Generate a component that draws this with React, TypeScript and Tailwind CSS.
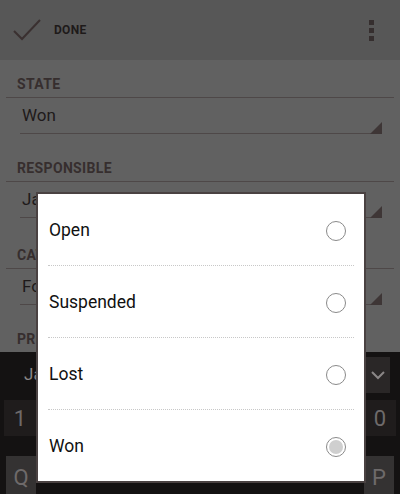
import React from "react";

const options = [
  { label: "Open", selected: false },
  { label: "Suspended", selected: false },
  { label: "Lost", selected: false },
  { label: "Won", selected: true },
];

const Field = ({ label, value }: { label: string; value: string }) => (
  <div>
    <div className="pt-[14px] pb-[2px] text-[14px] font-bold tracking-wide text-[#362e2e] border-b border-[#4e4848] mx-[6px] pl-[11px]">
      {label}
    </div>
    <div className="relative mx-[20px] h-[36px] border-b border-[#4e4848] flex items-center pl-[2px] pt-[1px] text-[17px] text-[#1e1a1a]">
      {value}
      <svg className="absolute right-[-2px] bottom-[-1px]" width="12" height="12" viewBox="0 0 12 12">
        <polygon points="12,0 12,12 0,12" fill="#3e3636" />
      </svg>
    </div>
  </div>
);

const App = () => {
  return (
    <div
      className="relative w-[400px] h-[494px] overflow-hidden bg-[#616161]"
      style={{ fontFamily: "Roboto, 'Noto Sans', sans-serif" }}
    >
      {/* action bar */}
      <div className="h-[60px] bg-[#575757] flex items-center">
        <svg className="ml-[12px]" width="30" height="26" viewBox="0 0 30 26">
          <path d="M2 14 L10 22 L28 3" fill="none" stroke="#3a3030" strokeWidth="2" />
        </svg>
        <span className="ml-[12px] text-[12px] font-bold tracking-wide text-[#1e1a1a]">DONE</span>
        <div className="ml-auto mr-[26px] flex flex-col gap-[3px]">
          <div className="w-[5px] h-[5px] bg-[#352e2e]" />
          <div className="w-[5px] h-[5px] bg-[#352e2e]" />
          <div className="w-[5px] h-[5px] bg-[#352e2e]" />
        </div>
      </div>

      {/* form */}
      <div className="h-[292px]">
        <Field label="STATE" value="Won" />
        <div className="h-[10px]" />
        <Field label="RESPONSIBLE" value="Jane" />
        <div className="h-[13px]" />
        <Field label="CATEGORY" value="Food" />
        <div className="pl-[17px] pt-[24px] text-[14px] font-bold tracking-wide text-[#362e2e]">PRODUCT</div>
      </div>

      {/* keyboard */}
      <div className="bg-[#141212] h-[142px]">
        <div className="h-[46px] flex items-center px-[24px] text-[17px] text-[#8a8686]">
          Ja
          <div className="ml-auto mr-[-14px] w-[24px] h-[36px] bg-[#2a2727] flex items-center justify-center">
            <svg width="14" height="10" viewBox="0 0 14 10">
              <path d="M1 2 L7 8 L13 2" fill="none" stroke="#8a8686" strokeWidth="2" />
            </svg>
          </div>
        </div>
        <div className="flex justify-between px-[4px] mt-[2px]">
          <div className="w-[32px] h-[36px] bg-[#1f1c1c] flex items-center justify-center text-[22px] text-[#6e6a6a]">1</div>
          <div className="w-[32px] h-[36px] bg-[#1f1c1c] flex items-center justify-center text-[22px] text-[#6e6a6a]">0</div>
        </div>
        <div className="flex justify-between px-[6px] mt-[20px]">
          <div className="w-[30px] h-[38px] bg-[#343232] flex items-end justify-center text-[22px] text-[#6e6a6a]">Q</div>
          <div className="w-[30px] h-[38px] bg-[#343232] flex items-end justify-center text-[22px] text-[#6e6a6a]">P</div>
        </div>
      </div>

      {/* dialog */}
      <div className="absolute left-[36px] top-[192px] w-[330px] border-2 border-[#4a4242]">
        <div className="bg-white">
          {options.map((o, i) => (
            <div key={o.label}>
              {i > 0 && <div className="mx-[10px] border-t border-dotted border-[#c8c8c8]" />}
              <div className="h-[71px] flex items-center pl-[11px] pr-[18px] pt-[2px] text-[17.5px] text-[#111]">
                {o.label}
                <div className="ml-auto w-[20px] h-[20px] rounded-full border border-[#8a8a8a] flex items-center justify-center">
                  {o.selected && <div className="w-[14px] h-[14px] rounded-full bg-[#cfcfcf]" />}
                </div>
              </div>
            </div>
          ))}
        </div>
      </div>
    </div>
  );
};

export default App;
